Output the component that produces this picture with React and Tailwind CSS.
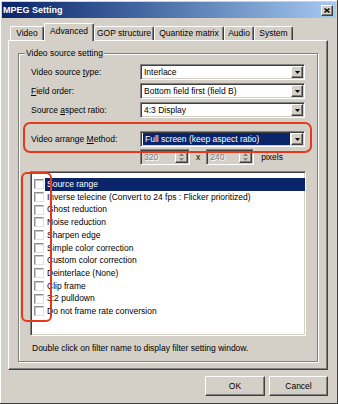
import React from 'react';

const sunken =
  'border border-t-[#808080] border-l-[#808080] border-b-white border-r-white shadow-[inset_1px_1px_#404040,inset_-1px_-1px_#d4d0c8]';
const raised =
  'border border-t-white border-l-white border-b-[#404040] border-r-[#404040] shadow-[inset_-1px_-1px_#808080]';

function DownArrow({ color = '#000' }) {
  return (
    <svg width="5" height="3" viewBox="0 0 5 3">
      <polygon points="0,0 5,0 2.5,3" fill={color} />
    </svg>
  );
}

function Combo({ value, selected }) {
  return (
    <div className={`w-[165px] h-[16px] flex bg-white ${sunken} p-[1px]`}>
      <div className="flex-1 flex items-center">
        {selected ? (
          <div className="h-full flex-1 flex items-center bg-[#0a246a] text-white pl-[2px] mx-[1px] my-[1px]">
            {value}
          </div>
        ) : (
          <span className="pl-[2px]">{value}</span>
        )}
      </div>
      <div className={`w-[12px] h-full bg-[#d4d0c8] flex items-center justify-center ${raised}`}>
        <DownArrow />
      </div>
    </div>
  );
}

function Spin({ value, width }) {
  return (
    <div className={`${width} h-[16px] flex bg-[#d4d0c8] ${sunken} p-[1px]`}>
      <div className="flex-1 flex items-center pl-[2px] text-[#808080] [text-shadow:1px_1px_0_#fff]">
        {value}
      </div>
      <div className={`w-[13px] h-full flex flex-col items-center justify-around ${raised}`}>
        <svg width="5" height="3" viewBox="0 0 5 3">
          <polygon points="0,3 5,3 2.5,0" fill="#808080" />
        </svg>
        <DownArrow color="#808080" />
      </div>
    </div>
  );
}

function Row({ label, children }) {
  return (
    <div className="h-[16px] flex items-center">
      <div className="w-[109px]">{label}</div>
      {children}
    </div>
  );
}

const tabs = [
  { name: 'Video', w: 'w-[34px]' },
  { name: 'Advanced', w: 'w-[50px]', active: true },
  { name: 'GOP structure', w: 'w-[60px]' },
  { name: 'Quantize matrix', w: 'w-[70px]' },
  { name: 'Audio', w: 'w-[30px]' },
  { name: 'System', w: 'w-[39px]' },
];

const filters = [
  'Source range',
  'Inverse telecine (Convert to 24 fps : Flicker prioritized)',
  'Ghost reduction',
  'Noise reduction',
  'Sharpen edge',
  'Simple color correction',
  'Custom color correction',
  'Deinterlace (None)',
  'Clip frame',
  '3:2 pulldown',
  'Do not frame rate conversion',
];

export default function App() {
  return (
    <div className="relative w-[338px] h-[404px] overflow-hidden bg-[#d4d0c8] shadow-[inset_-1px_-1px_#404040,inset_1px_1px_#fff] flex flex-col pt-[2px] px-[2px] text-[8.5px] leading-none text-black font-['Liberation_Sans',Arial,sans-serif]">
      {/* title bar */}
      <div className="h-[16px] flex items-center justify-between bg-linear-to-r from-[#0a246a] to-[#a6caf0] pl-[1px]">
        <span className="text-white font-bold text-[9px]">MPEG Setting</span>
        <div className={`w-[12px] h-[11px] mr-[3px] bg-[#d4d0c8] flex items-center justify-center ${raised}`}>
          <svg width="6" height="5" viewBox="0 0 6 5">
            <path d="M0.5 0.5 L5.5 4.5 M5.5 0.5 L0.5 4.5" stroke="#000" strokeWidth="1.4" />
          </svg>
        </div>
      </div>

      <div className="px-[6px]">
        {/* tabs */}
        <div className="mt-[5px] h-[17px] flex items-end pl-[2px]">
          {tabs.map((t) =>
            t.active ? (
              <div
                key={t.name}
                className={`${t.w} h-[18px] -mb-px relative z-10 bg-[#d4d0c8] flex items-center justify-center border-t border-l border-white border-r border-r-[#404040] rounded-t-[2px] shadow-[inset_-1px_0_#808080] pb-[3px]`}
              >
                {t.name}
              </div>
            ) : (
              <div
                key={t.name}
                className={`${t.w} h-[14px] flex items-center justify-center border-t border-l border-white border-r border-r-[#404040] rounded-t-[2px] shadow-[inset_-1px_0_#808080]`}
              >
                {t.name}
              </div>
            )
          )}
        </div>

        {/* panel */}
        <div className="w-[320px] h-[330px] border border-t-white border-l-white border-b-[#404040] border-r-[#404040] shadow-[inset_-1px_-1px_#808080] px-[9px] pt-[12px]">
          <div className="relative w-[300px] h-[309px] border border-[#808080] shadow-[inset_1px_1px_#fff,1px_1px_#fff] pl-[12px] pr-[12px] pt-[10px]">
            <span className="absolute left-[6px] -top-[5px] bg-[#d4d0c8] px-[1px]">Video source setting</span>

            <div className="flex flex-col gap-[3px]">
              <Row label={<>Video source <span className="underline">t</span>ype:</>}>
                <Combo value="Interlace" />
              </Row>
              <Row label={<><span className="underline">F</span>ield order:</>}>
                <Combo value="Bottom field first (field B)" />
              </Row>
              <Row label={<>Source <span className="underline">a</span>spect ratio:</>}>
                <Combo value="4:3 Display" />
              </Row>
            </div>

            <div className="mt-[13px]">
              <Row label={<>Video arrange <span className="underline">M</span>ethod:</>}>
                <Combo value="Full screen (keep aspect ratio)" selected />
              </Row>
            </div>

            <div className="mt-[2px] h-[16px] flex items-center">
              <div className="w-[109px]" />
              <Spin value="320" width="w-[50px]" />
              <span className="mx-[6px]">x</span>
              <Spin value="240" width="w-[48px]" />
              <span className="ml-[7px]">pixels</span>
            </div>

            <div className={`mt-[6px] -ml-px w-[276px] h-[165px] bg-white ${sunken} pt-[6px] pl-[1px]`}>
              {filters.map((f, i) => (
                <div key={f} className="h-[12.7px] flex items-center">
                  <div className="w-[10px] h-[10px] ml-[2px] bg-white border border-t-[#909090] border-l-[#909090] border-b-[#e0e0e0] border-r-[#e0e0e0] shadow-[inset_1px_1px_#c8c8c8]" />
                  <div
                    className={`flex-1 h-full ml-[1px] pl-[2px] flex items-center whitespace-nowrap ${
                      i === 0 ? 'bg-[#0a246a] text-white' : ''
                    }`}
                  >
                    {f}
                  </div>
                </div>
              ))}
            </div>

            <div className="mt-[7px] h-[10px] flex items-center pl-[1px]">
              Double click on filter name to display filter setting window.
            </div>
          </div>
        </div>

        {/* buttons */}
        <div className="w-[320px] mt-[6px] flex justify-end gap-[4px]">
          <button className={`w-[60px] h-[20px] bg-[#d4d0c8] ${raised} shadow-[inset_-1px_-1px_#808080,0_0_0_0.5px_#404040]`}>OK</button>
          <button className={`w-[59px] h-[20px] bg-[#d4d0c8] ${raised}`}>Cancel</button>
        </div>
      </div>

      {/* red annotation marks */}
      <div className="absolute left-[23px] top-[122px] w-[289px] h-[31px] border-2 border-[#e5391c] rounded-[7px] pointer-events-none" />
      <div className="absolute left-[21px] top-[172px] w-[31px] h-[150px] border-2 border-[#e5391c] rounded-[6px] pointer-events-none" />
    </div>
  );
}
